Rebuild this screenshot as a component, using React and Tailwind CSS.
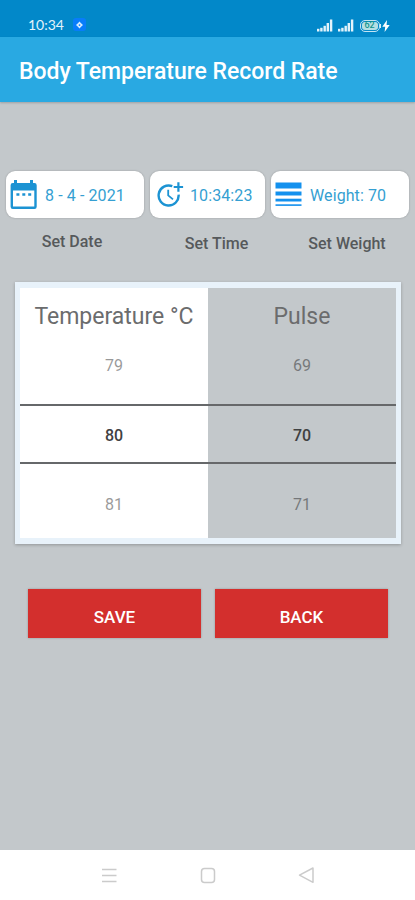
import React from "react";

const SignalIcon = () => (
  <svg width="16" height="13" viewBox="0 0 16 13" fill="#e3f3fb">
    <rect x="0" y="9.8" width="2.4" height="2.7" />
    <rect x="3.2" y="8.8" width="2.4" height="3.7" />
    <rect x="6.5" y="6.8" width="2.4" height="5.7" />
    <rect x="9.6" y="4" width="2.4" height="8.5" />
    <rect x="12.9" y="0.5" width="2.4" height="12" />
  </svg>
);

const BoltIcon = () => (
  <svg width="8" height="12" viewBox="0 0 8 12" fill="#ffffff">
    <path d="M5 0L0.3 6.8h2.9L2.6 12L7.7 5H4.6L5 0z" />
  </svg>
);

const CalendarIcon = () => (
  <svg width="27" height="30" viewBox="0 0 27 30" className="shrink-0">
    <path
      fill="#1c93d3"
      fillRule="evenodd"
      d="M4 0h3v3h13V0h3v3h1.5A2.2 2.2 0 0 1 26.7 5.2v21.6a2.2 2.2 0 0 1-2.2 2.2H2.8a2.2 2.2 0 0 1-2.2-2.2V5.2A2.2 2.2 0 0 1 2.8 3H4V0zM3 10.5v16h21.3v-16H3z"
    />
    <path fill="#1c93d3" d="M6.4 13.2h3v2.5h-3zM12.3 13.2h3v2.5h-3zM18.2 13.2h3v2.5h-3z" />
  </svg>
);

const ClockPlusIcon = () => (
  <svg
    width="27"
    height="26"
    viewBox="0 0 27 26"
    fill="none"
    stroke="#1c93d3"
    className="shrink-0"
  >
    <path strokeWidth="2.4" d="M15.3 4.2A10 10 0 1 0 21.6 12.6" />
    <path strokeWidth="2.2" d="M21.4 0.3v9.4M16.7 5h9.4" />
    <path strokeWidth="1.8" d="M11.2 7.8v5.6l4.8 4" />
  </svg>
);

const WeightIcon = () => (
  <svg width="27" height="25" viewBox="0 0 27 25" fill="#1491ee" className="shrink-0">
    <rect x="0.5" y="0.5" width="26" height="6" />
    <rect x="0.5" y="9.5" width="26" height="4" />
    <rect x="0.5" y="16.7" width="26" height="2.8" />
    <rect x="0.5" y="22.3" width="26" height="1.6" />
  </svg>
);

const StatusBar = () => (
  <div className="flex h-[37px] items-end justify-between bg-[#0288c9] pb-[5px] pl-[28px] pr-[25px]">
    <div className="flex items-center">
      <span className="w-[36px] pt-px font-[Lato] text-[14px] leading-[14px] text-[#e3f3fb] whitespace-nowrap">
        10:34
      </span>
      <span className="ml-[9px] flex h-[13px] w-[13px] items-center justify-center rounded-[3px] bg-[#087dfa]">
        <svg width="7" height="8" viewBox="0 0 8 8">
          <path fill="#d8ecff" d="M4 0l1.8 2L8 4L5.8 6L4 8L2.2 6L0 4l2.2-2z" />
          <circle cx="4" cy="4" r="1" fill="#087dfa" />
        </svg>
      </span>
    </div>
    <div className="flex items-center">
      <SignalIcon />
      <span className="ml-[5px] flex">
        <SignalIcon />
      </span>
      <span className="ml-[6px] flex h-[12px] w-[20px] items-center justify-center rounded-[5px] border-[1.5px] border-[#c4e4f4] bg-[#0288c9] p-px">
        <span className="flex h-full w-full items-center justify-center rounded-[3px] bg-[#b5dfe4] text-[9px] font-medium leading-none text-[#16958d]">
          62
        </span>
      </span>
      <span className="mr-[1px] h-[4px] w-[1.5px] bg-[#d5edf7]" />
      <BoltIcon />
    </div>
  </div>
);

const Chip = ({ icon, text, className }) => (
  <button
    className={`flex h-[47px] items-center rounded-[9px] bg-white text-[16px] text-[#359fd2] shadow-[0_0_2px_rgba(0,0,0,0.25)] ${className}`}
  >
    {icon}
    <span className="whitespace-nowrap pt-[2px] tracking-[0.1px]">{text}</span>
  </button>
);

const Picker = ({ title, values, className }) => (
  <div className={`flex flex-1 flex-col text-center ${className}`}>
    <div className="h-[50px] pt-[13px] text-[23px] leading-[32px] text-[#6b6c6d]">
      {title}
    </div>
    <div className="h-[66px] pt-[17px] text-[16px] leading-[22px] opacity-40">
      {values[0]}
    </div>
    <div className="h-[60px] border-y-2 border-[#66686a] text-[16px] font-medium leading-[60px] text-[#3f4142]">
      {values[1]}
    </div>
    <div className="pt-[30px] text-[16px] leading-[22px] opacity-40">
      {values[2]}
    </div>
  </div>
);

const NavBar = () => (
  <div className="flex h-[50px] items-center justify-center bg-white">
    <svg width="216" height="18" viewBox="0 0 216 18" fill="none" stroke="#cbcbcb" strokeWidth="1.5">
      <path d="M2 3.5h14.5M2 9.5h14.5M2 15.5h14.5" />
      <rect x="101.5" y="2.5" width="13" height="14" rx="3" />
      <path strokeLinejoin="round" d="M213 2v14.3L199.5 9.2z" />
    </svg>
  </div>
);

const App = () => {
  return (
    <div className="flex h-[900px] w-[415px] flex-col overflow-hidden bg-[#c3c8cb] font-[Roboto,sans-serif]">
      <StatusBar />
      <header className="flex h-[65px] items-center bg-[#29a9e2] pl-[19px] shadow-[0_1px_2px_rgba(0,0,0,0.2)]">
        <h1 className="pt-[5px] text-[23px] font-medium tracking-[-0.03px] whitespace-nowrap text-white">
          Body Temperature Record Rate
        </h1>
      </header>

      <main className="flex flex-1 flex-col">
        {/* Date, time and weight */}
        <div className="mt-[69px] flex gap-[6px] pl-[6px]">
          <Chip icon={<CalendarIcon />} text="8 - 4 - 2021" className="w-[138px] gap-[8px] pl-[4px]" />
          <Chip icon={<ClockPlusIcon />} text="10:34:23" className="w-[115px] gap-[6px] pl-[7px]" />
          <Chip icon={<WeightIcon />} text="Weight: 70" className="w-[138px] gap-[8px] pl-[4px]" />
        </div>
        <div className="flex h-[64px] text-[16px] font-medium leading-[20px] text-[#56595b]">
          <span className="w-[144px] pt-[14px] text-center">Set Date</span>
          <span className="w-[145px] pt-[16px] text-center">Set Time</span>
          <span className="w-[116px] pt-[16px] text-center">Set Weight</span>
        </div>

        {/* Value pickers */}
        <div className="ml-[15px] flex h-[262px] w-[386px] border-x-[5px] border-y-[6px] border-[#e8f2fa] shadow-[0_1px_3px_rgba(0,0,0,0.25)]">
          <Picker title="Temperature °C" values={[79, 80, 81]} className="bg-white" />
          <Picker title="Pulse" values={[69, 70, 71]} className="bg-[#c3c8cb]" />
        </div>

        <div className="mt-[45px] flex gap-[14px] pl-[28px] text-[17px] font-medium text-white">
          <button className="h-[49px] w-[173px] bg-[#d32f2d] pt-[8px] shadow-[0_0_2px_rgba(0,0,0,0.25)]">
            SAVE
          </button>
          <button className="h-[49px] w-[173px] bg-[#d32f2d] pt-[8px] shadow-[0_0_2px_rgba(0,0,0,0.25)]">
            BACK
          </button>
        </div>
      </main>

      <NavBar />
    </div>
  );
};

export default App;
